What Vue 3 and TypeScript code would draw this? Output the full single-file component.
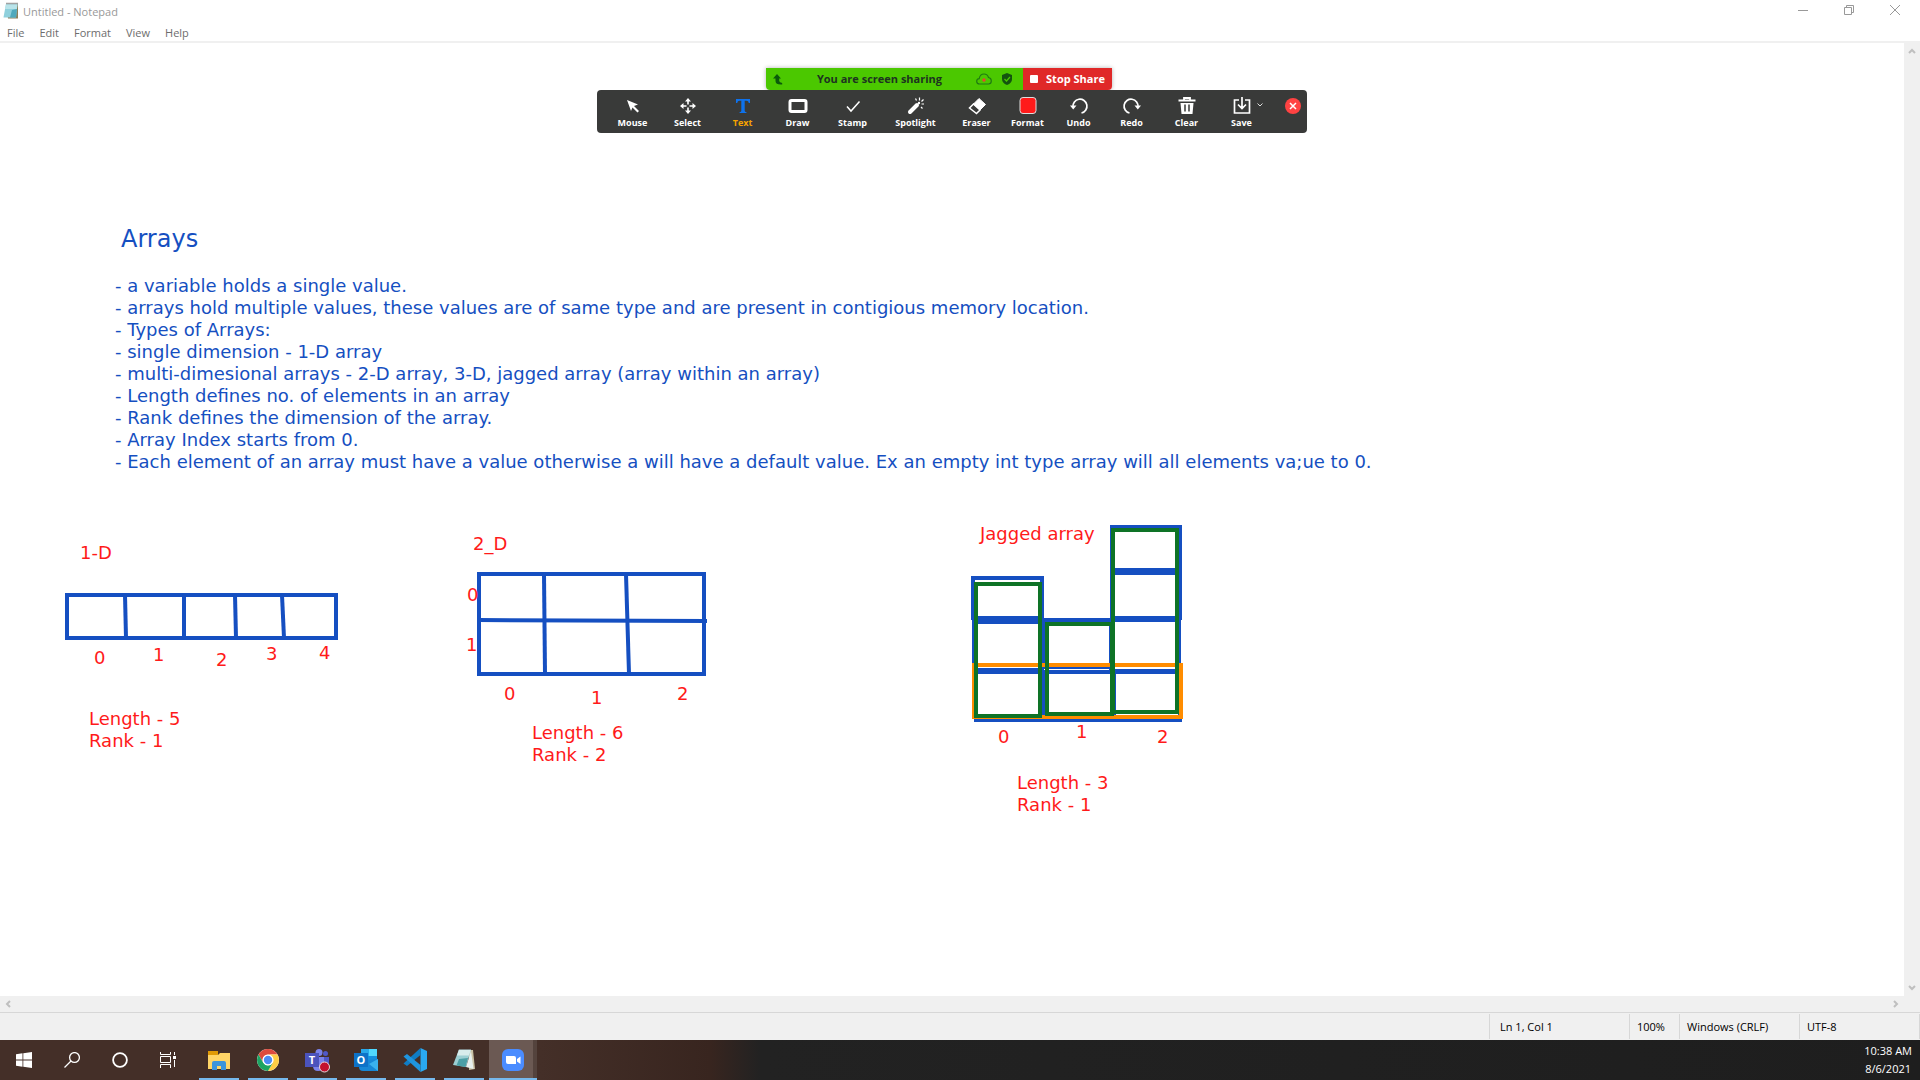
<script setup lang="ts">
interface Box {
  x: number
  y: number
  w: number
  h: number
  color: string
}
interface Segment {
  x1: number
  y1: number
  x2: number
  y2: number
}
interface Label {
  x: number
  y: number
  lines: string[]
}
interface Tool {
  id: string
  name: string
  size?: string
}
interface TaskApp {
  id: string
  name: string
}

const BLUE = '#154fc1'
const ORANGE = '#ff8c00'
const GREEN = '#0e7326'

const menus: string[] = ['File', 'Edit', 'Format', 'View', 'Help']

const notes: string[] = [
  '- a variable holds a single value.',
  '- arrays hold multiple values, these values are of same type and are present in contigious memory location.',
  '- Types of Arrays:',
  '- single dimension - 1-D array',
  '- multi-dimesional arrays - 2-D array, 3-D, jagged array (array within an array)',
  '- Length defines no. of elements in an array',
  '- Rank defines the dimension of the array.',
  '- Array Index starts from 0.',
  '- Each element of an array must have a value otherwise a will have a default value. Ex an empty int type array will all elements va;ue to 0.',
]

const boxes: Box[] = [
  { x: 67, y: 595, w: 269, h: 43, color: BLUE },
  { x: 479, y: 574, w: 225, h: 100, color: BLUE },
  { x: 973, y: 578, w: 69, h: 40, color: BLUE },
  { x: 974, y: 622, w: 68, h: 48, color: BLUE },
  { x: 976, y: 672, w: 66, h: 48, color: BLUE },
  { x: 1044, y: 620, w: 67, h: 47, color: BLUE },
  { x: 1043, y: 672, w: 70, h: 48, color: BLUE },
  { x: 1112, y: 527, w: 68, h: 43, color: BLUE },
  { x: 1112, y: 573, w: 68, h: 45, color: BLUE },
  { x: 1111, y: 620, w: 68, h: 51, color: BLUE },
  { x: 1114, y: 672, w: 66, h: 48, color: BLUE },
  { x: 974, y: 665, w: 207, h: 52, color: ORANGE },
  { x: 976, y: 584, w: 64, h: 132, color: GREEN },
  { x: 1047, y: 624, w: 65, h: 90, color: GREEN },
  { x: 1113, y: 530, w: 64, h: 182, color: GREEN },
]

const segments: Segment[] = [
  { x1: 125, y1: 595, x2: 126, y2: 638 },
  { x1: 184, y1: 595, x2: 184, y2: 638 },
  { x1: 235, y1: 595, x2: 236, y2: 638 },
  { x1: 282, y1: 595, x2: 284, y2: 638 },
  { x1: 544, y1: 574, x2: 545, y2: 674 },
  { x1: 626, y1: 574, x2: 629, y2: 674 },
  { x1: 479, y1: 620, x2: 707, y2: 621 },
]

const labels: Label[] = [
  { x: 80, y: 542, lines: ['1-D'] },
  { x: 94, y: 647, lines: ['0'] },
  { x: 153, y: 644, lines: ['1'] },
  { x: 216, y: 649, lines: ['2'] },
  { x: 266, y: 643, lines: ['3'] },
  { x: 319, y: 642, lines: ['4'] },
  { x: 89, y: 708, lines: ['Length - 5', 'Rank - 1'] },
  { x: 473, y: 533, lines: ['2_D'] },
  { x: 467, y: 584, lines: ['0'] },
  { x: 466, y: 634, lines: ['1'] },
  { x: 504, y: 683, lines: ['0'] },
  { x: 591, y: 687, lines: ['1'] },
  { x: 677, y: 683, lines: ['2'] },
  { x: 532, y: 722, lines: ['Length - 6', 'Rank - 2'] },
  { x: 980, y: 523, lines: ['Jagged array'] },
  { x: 998, y: 726, lines: ['0'] },
  { x: 1076, y: 721, lines: ['1'] },
  { x: 1157, y: 726, lines: ['2'] },
  { x: 1017, y: 772, lines: ['Length - 3', 'Rank - 1'] },
]

const tools: Tool[] = [
  { id: 'mouse', name: 'Mouse' },
  { id: 'select', name: 'Select' },
  { id: 'text', name: 'Text' },
  { id: 'draw', name: 'Draw' },
  { id: 'stamp', name: 'Stamp' },
  { id: 'spotlight', name: 'Spotlight', size: 'wide' },
  { id: 'eraser', name: 'Eraser', size: 'narrow' },
  { id: 'format', name: 'Format', size: 'narrow' },
  { id: 'undo', name: 'Undo', size: 'narrow' },
  { id: 'redo', name: 'Redo' },
  { id: 'clear', name: 'Clear' },
  { id: 'save', name: 'Save' },
]

const apps: TaskApp[] = [
  { id: 'explorer', name: 'File Explorer' },
  { id: 'chrome', name: 'Google Chrome' },
  { id: 'teams', name: 'Microsoft Teams' },
  { id: 'outlook', name: 'Outlook' },
  { id: 'code', name: 'Visual Studio Code' },
  { id: 'notepad', name: 'Notepad' },
  { id: 'zoom', name: 'Zoom' },
]
</script>

<template>
  <div class="screen">
    <header class="titlebar">
      <svg class="app-icon" width="16" height="18" viewBox="0 0 16 18" aria-hidden="true">
        <path d="M3 2h12v14.500H5z" fill="#8a7f5c" />
        <path d="M3 2h11.500L13 15.500H0.500z" fill="#8fd0dc" />
        <path d="M3 2h11.500l-.6 5H2z" fill="#b9e4ea" />
        <path d="M9 8l5-1-1 8.500H7z" fill="#4fa9bd" />
        <path d="M3.500 1.500h11" stroke="#444" stroke-width="1.500" stroke-dasharray="1 1" />
      </svg>
      <span class="title">Untitled - Notepad</span>
      <div class="window-buttons">
        <button type="button" aria-label="Minimize">
          <svg width="10" height="10" viewBox="0 0 10 10"><path d="M0 5.500h10" /></svg>
        </button>
        <button type="button" aria-label="Restore">
          <svg width="10" height="10" viewBox="0 0 10 10"><path d="M.5 2.500h7v7h-7zM2.500 2.500v-2h7v7h-2" /></svg>
        </button>
        <button type="button" aria-label="Close">
          <svg width="10" height="10" viewBox="0 0 10 10"><path d="M0 0l10 10M10 0L0 10" /></svg>
        </button>
      </div>
    </header>

    <nav class="menubar" aria-label="Menu">
      <button v-for="m in menus" :key="m" type="button">{{ m }}</button>
    </nav>

    <main class="editor">
      <textarea class="page" aria-label="Document text" spellcheck="false"></textarea>
      <div class="vscroll">
        <button type="button" aria-label="Scroll up">
          <svg width="8" height="8" viewBox="0 0 8 8"><path d="M1 6l3-3 3 3" /></svg>
        </button>
        <button type="button" aria-label="Scroll down">
          <svg width="8" height="8" viewBox="0 0 8 8"><path d="M1 2l3 3 3-3" /></svg>
        </button>
      </div>
    </main>
    <div class="hscroll">
      <button type="button" aria-label="Scroll left">
        <svg width="8" height="8" viewBox="0 0 8 8"><path d="M6 1L3 4l3 3" /></svg>
      </button>
      <button type="button" aria-label="Scroll right">
        <svg width="8" height="8" viewBox="0 0 8 8"><path d="M2 1l3 3-3 3" /></svg>
      </button>
    </div>

    <footer class="statusbar">
      <span class="cell position">Ln 1, Col 1</span>
      <span class="cell percent">100%</span>
      <span class="cell ending">Windows (CRLF)</span>
      <span class="cell ending">UTF-8</span>
    </footer>

    <div class="taskbar">
      <button type="button" class="system" aria-label="Start">
        <svg width="16" height="16" viewBox="0 0 16 16"><path fill="#fff" d="M0 2.200L6.500 1.300V7.600H0zM7.300 1.200L16 0v7.600H7.300zM0 8.400h6.500v6.300L0 13.800zM7.300 8.400H16V16l-8.700-1.200z" /></svg>
      </button>
      <button type="button" class="system" aria-label="Search">
        <svg width="16" height="16" viewBox="0 0 16 16" fill="none" stroke="#fff" stroke-width="1.300"><circle cx="10.500" cy="5.500" r="4.900" /><path d="M7 9L.5 15.500" /></svg>
      </button>
      <button type="button" class="system" aria-label="Cortana">
        <svg width="16" height="16" viewBox="0 0 16 16" fill="none" stroke="#fff" stroke-width="1.800"><circle cx="8" cy="8" r="6.900" /></svg>
      </button>
      <button type="button" class="system" aria-label="Task View">
        <svg width="16" height="16" viewBox="0 0 16 16" fill="none" stroke="#fff"><path d="M.5 0v2.500h10V0M.5 16v-3.500h10V16M.5 4.500h10v6H.5zM14.500 0v3M14.500 8v7" /><path d="M13 4h3v3h-3z" fill="#fff" stroke="none" /></svg>
      </button>
      <div class="apps">
        <button v-for="a in apps" :key="a.id" type="button" class="task" :class="a.id" :aria-label="a.name">
          <svg width="24" height="24" viewBox="0 0 24 24" aria-hidden="true">
            <template v-if="a.id === 'explorer'">
              <path d="M1 3h10v5H1z" fill="#e09a06" />
              <path d="M1 7h10l2-2h10v16H1z" fill="#ffd567" />
              <path d="M5 22v-7q0-2 2-2h10q2 0 2 2v7h-5v-4h-4v4z" fill="#3c94dc" />
            </template>
            <template v-else-if="a.id === 'chrome'">
              <circle cx="12" cy="12" r="11" fill="#fff" />
              <path d="M2.500 6.500A11 11 0 0 1 21.500 6.500H12A5.500 5.500 0 0 0 7.200 14.700z" fill="#dd4b3e" />
              <path d="M21.500 6.500A11 11 0 0 1 12 23l4.800-8.300A5.500 5.500 0 0 0 12 6.500z" fill="#ffce44" />
              <path d="M12 23A11 11 0 0 1 2.500 6.500l4.700 8.200a5.500 5.500 0 0 0 9.600 0z" fill="#1da462" />
              <circle cx="12" cy="12" r="5.300" fill="#fff" />
              <circle cx="12" cy="12" r="4.200" fill="#4b8bf4" />
            </template>
            <template v-else-if="a.id === 'teams'">
              <circle cx="14" cy="4.500" r="3.500" fill="#7b83eb" />
              <circle cx="20.500" cy="5.500" r="2.500" fill="#5059c9" />
              <path d="M16 9h8v7q0 4-4 4h-4z" fill="#5059c9" />
              <path d="M8 9h11v9q0 5-6 5-5 0-5-5z" fill="#7b83eb" />
              <path d="M0 5h14v14H0z" fill="#4b53bc" />
              <text x="7" y="16" text-anchor="middle" class="glyph">T</text>
              <circle cx="19.500" cy="19" r="5" fill="#c4122f" stroke="#e8d7d9" />
            </template>
            <template v-else-if="a.id === 'outlook'">
              <path d="M7 1h16v14H7z" fill="#1490df" />
              <path d="M7 1h8v7H7z" fill="#28a8ea" />
              <path d="M15 1h8v7h-8z" fill="#50d9ff" />
              <path d="M5 13l19-2v12H9q-4 0-4-4z" fill="#1787d6" />
              <path d="M24 11v12l-9-7z" fill="#39b1ee" />
              <path d="M0 5h14v14H0z" fill="#0d72c8" />
              <text x="7" y="16" text-anchor="middle" class="glyph">O</text>
            </template>
            <template v-else-if="a.id === 'code'">
              <path d="M17.500 0L24 3v18l-6.500 3z" fill="#2aa9f2" />
              <path d="M17.500 0v7L4 18l-3.500-2.500z" fill="#0f7cc4" />
              <path d="M17.500 24v-7L4 6 .5 8.500z" fill="#1f95df" />
            </template>
            <template v-else-if="a.id === 'notepad'">
              <path d="M17 2h4l2 19-6 1z" fill="#c9c1a4" />
              <path d="M7 1.500h12L14 19 1 17z" fill="#9ccfd3" />
              <path d="M7 1.500h12l-2 6H5z" fill="#d8ecec" />
              <path d="M19 3l2.500 18L14 19z" fill="#e8f0ee" />
              <path d="M7 11l9-1-2.500 9-9-1.500z" fill="#4c9fa6" />
              <path d="M7.500 1.500h12" stroke="#555" stroke-dasharray="1 1" />
            </template>
            <template v-else>
              <rect x="1" y="1" width="22" height="22" rx="6" fill="#4a8cff" />
              <path d="M5 8h8q2 0 2 2v6H7q-2 0-2-2zM16 11l3.500-2.500v7.500L16 13.500z" fill="#fff" />
            </template>
          </svg>
        </button>
      </div>
      <div class="clock">
        <span>10:38 AM</span>
        <span>8/6/2021</span>
      </div>
    </div>

    <section class="annotations">
      <div class="notes">
        <h1>Arrays</h1>
        <p v-for="n in notes" :key="n">{{ n }}</p>
      </div>
      <svg class="drawing" aria-hidden="true">
        <rect v-for="(b, i) in boxes" :key="'b' + i" :x="b.x" :y="b.y" :width="b.w" :height="b.h" :stroke="b.color" />
        <line v-for="(s, i) in segments" :key="'s' + i" :x1="s.x1" :y1="s.y1" :x2="s.x2" :y2="s.y2" :stroke="BLUE" />
      </svg>
      <div v-for="(l, i) in labels" :key="i" class="label" :style="{ left: l.x + 'px', top: l.y + 'px' }">
        <div v-for="t in l.lines" :key="t">{{ t }}</div>
      </div>
    </section>

    <section class="share" aria-label="Screen sharing controls">
      <div class="share-status">
        <div class="sharing">
          <svg width="10" height="12" viewBox="0 0 10 12"><path d="M4 1l4 4.500H6.200V8q.3 1.500 3 2v1.500Q2.500 12 2.500 8V5.500H0z" fill="#0b5a0b" /></svg>
          <span class="sharing-text">You are screen sharing</span>
          <svg width="16" height="12" viewBox="0 0 16 12"><path d="M3.500 11Q.7 11 .7 8.300.7 6 3.200 5.700 4 1 8 1q3.500 0 4.500 3.500 2.800.5 2.800 3.500T12.500 11z" fill="none" stroke="#1f7a12" stroke-width="1.200" /><circle cx="8" cy="7" r="1.700" fill="#e8432e" /></svg>
          <svg width="12" height="12" viewBox="0 0 12 12"><path d="M6 0l5 2v4q0 4-5 6-5-2-5-6V2z" fill="#14540f" /><path d="M3.500 6l2 2 3.500-4" fill="none" stroke="#4bc800" stroke-width="1.200" /></svg>
        </div>
        <button type="button" class="stop"><span class="stop-square"></span>Stop Share</button>
      </div>
      <div class="toolbar" role="toolbar" aria-label="Annotation tools">
        <button v-for="t in tools" :key="t.id" type="button" class="tool" :class="[t.size, { active: t.id === 'text' }]">
          <svg width="20" height="20" viewBox="0 0 20 20" fill="none" stroke="#fff" aria-hidden="true">
            <path v-if="t.id === 'mouse'" d="M4 4l11 4.500-4 1.500 5 5-1.500 1.500-5-5L8 15z" fill="#fff" stroke="none" />
            <g v-else-if="t.id === 'select'">
              <path d="M10 4v12M4 10h12" stroke-width="1.600" stroke-dasharray="4.500 3" />
              <path d="M10 2l3 3.500H7zM10 18l3-3.500H7zM2 10l3.500-3v6zM18 10l-3.500-3v6z" fill="#fff" stroke="none" />
            </g>
            <path v-else-if="t.id === 'text'" d="M3 3h14v4h-1.200q-.3-2.300-2.300-2.300h-1.800V15q0 1 1.800 1.200V17H6.500v-.8q1.800-.2 1.800-1.200V4.700H6.500Q4.500 4.700 4.200 7H3z" fill="#0e72ed" stroke="none" />
            <rect v-else-if="t.id === 'draw'" x="2" y="4.500" width="16" height="11" rx="1.500" stroke-width="3" />
            <path v-else-if="t.id === 'stamp'" d="M4 10.500l4 4.500 8.500-9.500" stroke-width="1.500" />
            <g v-else-if="t.id === 'spotlight'">
              <path d="M4 16l7-7" stroke-width="4" stroke-linecap="round" />
              <path d="M9.500 2.500l1 2M13.500 1.500v3M17.500 3.500l-2 2M15.500 8h2.500M15 11l1.500 1.500" stroke-width="1.200" />
              <circle cx="13" cy="7" r="1.200" fill="#fff" stroke="none" />
            </g>
            <g v-else-if="t.id === 'eraser'">
              <path d="M12 2.500l6.500 6-5.500 5.500-6.500-6z" fill="#fff" stroke="#fff" />
              <path d="M6.500 8l6.500 6-3.500 3.500L2.500 12z" stroke-width="1.500" />
            </g>
            <rect v-else-if="t.id === 'format'" x="2" y="1.500" width="16" height="16" rx="3" fill="#ff1a1a" stroke="#ddd" />
            <g v-else-if="t.id === 'undo'">
              <path d="M4 11a7 7 0 1 1 8.500 6" stroke-width="1.700" />
              <path d="M1 9.500h6.500L4.200 13.500z" fill="#fff" stroke="none" />
            </g>
            <g v-else-if="t.id === 'redo'">
              <path d="M16 11a7 7 0 1 0-8.500 6" stroke-width="1.700" />
              <path d="M19 9.500h-6.500l3.300 4z" fill="#fff" stroke="none" />
            </g>
            <g v-else-if="t.id === 'clear'">
              <path d="M1.500 4.500h17M7 4V2h6v2" stroke-width="1.800" />
              <path d="M3.500 7h13l-1 11h-11z" fill="#fff" stroke="none" />
              <path d="M8 8.500v7M12 8.500v7" stroke="#393a39" stroke-width="1.500" />
            </g>
            <g v-else>
              <path d="M7 4H2.500v13h15V4H13M10 1v11M6 8.500l4 4 4-4" stroke-width="1.700" />
            </g>
          </svg>
          <span>{{ t.name }}</span>
          <svg v-if="t.id === 'save'" class="caret" width="6" height="4" viewBox="0 0 6 4" fill="none" stroke="#ddd"><path d="M.5.5L3 3 5.500.5" /></svg>
        </button>
        <button type="button" class="close-tools" aria-label="Close annotation toolbar">
          <svg width="16" height="16" viewBox="0 0 16 16"><circle cx="8" cy="8" r="8" fill="#ff4242" /><path d="M5 5l6 6M11 5l-6 6" stroke="#fff" stroke-width="1.500" /></svg>
        </button>
      </div>
    </section>
  </div>
</template>

<style>
body {
  margin: 0;
}
</style>

<style scoped>
.screen {
  position: relative;
  display: flex;
  flex-direction: column;
  min-height: 100vh;
  overflow: hidden;
  background: #fff;
  font-family: 'Open Sans', 'Noto Sans', sans-serif;
  font-size: 11px;
  line-height: 16px;
}
button {
  display: flex;
  align-items: center;
  justify-content: center;
  padding: 0;
  border: 0;
  background: none;
  color: inherit;
  font: inherit;
}
.titlebar {
  display: flex;
  align-items: center;
  height: 24px;
  color: #999;
}
.app-icon {
  margin: 0 4px 2px 3px;
}
.window-buttons {
  display: flex;
  margin: 0 2px 4px auto;
}
.window-buttons button {
  width: 46px;
  height: 20px;
}
.window-buttons svg {
  fill: none;
  stroke: #999;
}
.menubar {
  display: flex;
  gap: 15px;
  height: 17px;
  padding-left: 7px;
  border-bottom: 2px solid #f0f0f0;
  color: #6d6d6d;
}
.editor {
  display: flex;
  flex: 1;
}
.page {
  flex: 1;
  border: 0;
  padding: 4px;
  outline: 0;
  resize: none;
}
.vscroll {
  display: flex;
  flex-direction: column;
  justify-content: space-between;
  width: 16px;
  background: #f0f0f0;
}
.vscroll button,
.hscroll button {
  width: 16px;
  height: 16px;
}
.vscroll svg,
.hscroll svg {
  fill: none;
  stroke: #bfbfbf;
  stroke-width: 2;
}
.hscroll {
  display: flex;
  justify-content: space-between;
  padding-right: 16px;
  background: #f0f0f0;
}
.statusbar {
  display: flex;
  justify-content: flex-end;
  height: 27px;
  border-top: 1px solid #d7d7d7;
  background: #f0f0f0;
  color: #000;
  line-height: 25px;
}
.cell {
  box-sizing: border-box;
  height: 25px;
  margin-top: 1px;
  padding-left: 7px;
  border-left: 1px solid #d7d7d7;
}
.position {
  width: 140px;
  padding-left: 10px;
}
.percent {
  width: 50px;
}
.ending {
  width: 120px;
}
.cell:last-child {
  width: 121px;
  border-right: 1px solid #d7d7d7;
}
.taskbar {
  display: flex;
  height: 40px;
  background: linear-gradient(90deg, #442f28 0, #442f28 540px, #38251f 710px, #222 760px, #1e1e1e 100%);
  color: #fff;
}
.system {
  width: 48px;
}
.apps {
  display: flex;
  padding-left: 2px;
}
.task {
  position: relative;
  width: 49px;
}
.task svg {
  overflow: visible;
}
.task::after {
  content: '';
  position: absolute;
  right: 4px;
  bottom: 0;
  left: 5px;
  height: 2px;
  background: #76b9ed;
}
.zoom {
  width: 48px;
  margin-left: 1px;
  background: #6b5953;
  box-shadow: inset -4px 0 #54433d;
}
.zoom::after {
  right: 0;
  left: 0;
}
.glyph {
  fill: #fff;
  font-size: 11px;
  font-weight: 700;
}
.clock {
  display: flex;
  flex-direction: column;
  align-items: center;
  margin-left: auto;
  padding: 2px 8px 0 0;
  line-height: 18px;
}
.annotations {
  position: absolute;
  inset: 0;
  overflow: hidden;
  color: #ff1a1a;
  font-family: Verdana, 'DejaVu Sans', sans-serif;
  font-size: 18px;
  line-height: 22px;
  pointer-events: none;
}
.notes {
  padding: 224px 0 0 115px;
  color: #154fc1;
}
.notes h1 {
  margin: 0 0 21px 6px;
  font-size: 24px;
  font-weight: 400;
  line-height: 30px;
}
.notes p {
  margin: 0;
  white-space: nowrap;
}
.drawing {
  position: absolute;
  inset: 0;
  width: 100%;
  height: 100%;
  fill: none;
  stroke-width: 4;
}
.label {
  position: absolute;
  white-space: nowrap;
}
.share {
  position: absolute;
  top: 68px;
  left: 597px;
}
.share-status {
  display: flex;
  width: 346px;
  height: 22px;
  margin-left: 169px;
  border-radius: 0 0 4px 4px;
  box-shadow: 0 0 4px rgba(0, 0, 0, 0.3);
  overflow: hidden;
}
.sharing {
  display: flex;
  flex: 1;
  align-items: center;
  gap: 9px;
  padding: 0 10px 0 7px;
  background: #4bc800;
  color: #1d3320;
}
.sharing-text {
  flex: 1;
  font-size: 11px;
  font-weight: 700;
  text-align: center;
}
.stop {
  gap: 8px;
  width: 89px;
  background: #e02828;
  color: #fff;
  font-size: 11px;
  font-weight: 700;
}
.stop-square {
  width: 8px;
  height: 8px;
  border-radius: 1px;
  background: #fff;
}
.toolbar {
  display: flex;
  width: 702px;
  height: 43px;
  padding-left: 8px;
  border-radius: 4px;
  background: #393a39;
  color: #fff;
  font-size: 9px;
  font-weight: 700;
  line-height: 12px;
}
.tool {
  position: relative;
  flex-direction: column;
  justify-content: flex-start;
  gap: 1px;
  width: 55px;
  padding-top: 6px;
}
.wide {
  width: 71px;
}
.narrow {
  width: 51px;
}
.active {
  color: #f5a300;
}
.caret {
  position: absolute;
  top: 13px;
  right: 6px;
}
.close-tools {
  align-self: flex-start;
  margin: 8px 0 0 16px;
}
</style>
